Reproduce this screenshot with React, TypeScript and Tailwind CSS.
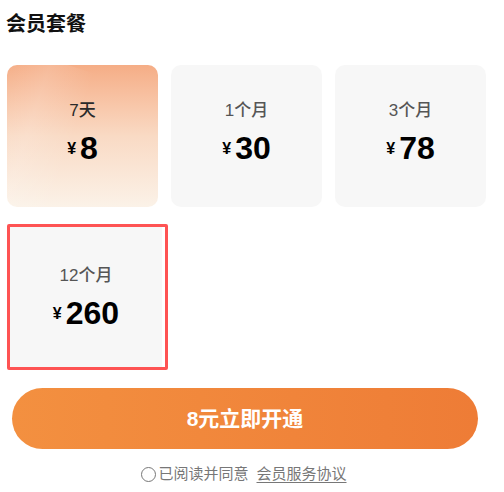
import React from "react";

const font = { fontFamily: '"Liberation Sans", "Noto Sans CJK SC", sans-serif' };

type Plan = { label: string; price: string; active?: boolean };

const plans: Plan[] = [
  { label: "7天", price: "8", active: true },
  { label: "1个月", price: "30" },
  { label: "3个月", price: "78" },
];

function Price({ value }: { value: string }) {
  return (
    <div className="relative mt-[9px] flex items-center gap-[4px] text-black">
      <span className="text-[16px] leading-[20px] font-bold mt-[2px]">¥</span>
      <span className="text-[32px] leading-[34px] font-bold">{value}</span>
    </div>
  );
}

function PlanCard({ plan }: { plan: Plan }) {
  return (
    <div
      className={
        "relative w-[151px] h-[142px] rounded-[10px] overflow-hidden flex flex-col items-center pt-[35px] " +
        (plan.active
          ? "bg-gradient-to-b from-[#f5ad86] via-[#f9dac4] to-[#fbf2e8]"
          : "bg-[#f7f7f7]")
      }
    >
      {plan.active && (
        <div className="absolute left-[-30px] top-[-10px] w-[90px] h-[190px] rotate-[18deg] bg-gradient-to-r from-transparent via-white/15 to-transparent" />
      )}
      <span
        className={
          "relative text-[17px] leading-[22px] font-medium " +
          (plan.active ? "text-[#2a2a2a]" : "text-[#555]")
        }
      >
        {plan.label}
      </span>
      <Price value={plan.price} />
    </div>
  );
}

export default function App() {
  return (
    <div className="w-[504px] h-[492px] bg-white overflow-hidden" style={font}>
      <h2 className="pl-[6px] pt-[11px] text-[20px] leading-[26px] font-bold text-[#111]">
        会员套餐
      </h2>

      <div className="mt-[28px] pl-[7px] flex gap-[13px]">
        {plans.map((p) => (
          <PlanCard key={p.label} plan={p} />
        ))}
      </div>

      <div className="mt-[17px] ml-[7px] w-[161px] h-[146px] border-[3px] border-[#fe5353] rounded-[2px] bg-white pr-[3px]">
        <div className="h-full bg-[#f7f7f7] flex flex-col items-center pt-[38px]">
          <span className="text-[17px] leading-[22px] font-medium text-[#555]">12个月</span>
          <Price value="260" />
        </div>
      </div>

      <div className="mt-[18px] mx-[12px] w-[466px] h-[61px] rounded-full bg-gradient-to-r from-[#f39040] to-[#ee7c36] flex items-center justify-center">
        <span className="text-white text-[21px] font-semibold">8元立即开通</span>
      </div>

      <div className="mt-[15px] pr-[16px] flex items-center justify-center text-[15px] leading-[20px] text-[#777]">
        <span className="w-[15px] h-[15px] rounded-full border-[1.5px] border-[#777] mr-[2px]" />
        <span>已阅读并同意</span>
        <span className="ml-[8px] underline underline-offset-[3px]">会员服务协议</span>
      </div>
    </div>
  );
}
